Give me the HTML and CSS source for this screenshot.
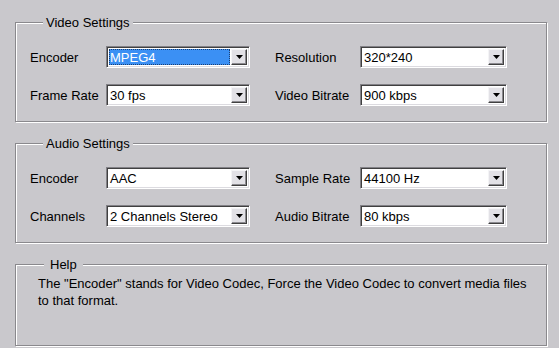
FILE: index.html
```html
<!DOCTYPE html>
<html lang="en">
<head>
    <meta charset="UTF-8">
    <title>Settings</title>
    <link rel="stylesheet" href="styles.css">
</head>
<body>
    <div class="panel">
        <fieldset class="group">
            <legend>Video Settings</legend>
            <div class="grid">
                <span class="label">Encoder</span>
                <div class="combo"><span class="value selected">MPEG4</span><span class="btn"><svg width="7" height="4" viewBox="0 0 7 4"><path d="M0 0h7L3.5 4z"/></svg></span></div>
                <span class="label col2">Resolution</span>
                <div class="combo"><span class="value">320*240</span><span class="btn"><svg width="7" height="4" viewBox="0 0 7 4"><path d="M0 0h7L3.5 4z"/></svg></span></div>

                <span class="label">Frame Rate</span>
                <div class="combo"><span class="value">30 fps</span><span class="btn"><svg width="7" height="4" viewBox="0 0 7 4"><path d="M0 0h7L3.5 4z"/></svg></span></div>
                <span class="label col2">Video Bitrate</span>
                <div class="combo"><span class="value">900 kbps</span><span class="btn"><svg width="7" height="4" viewBox="0 0 7 4"><path d="M0 0h7L3.5 4z"/></svg></span></div>
            </div>
        </fieldset>

        <fieldset class="group">
            <legend>Audio Settings</legend>
            <div class="grid">
                <span class="label">Encoder</span>
                <div class="combo"><span class="value">AAC</span><span class="btn"><svg width="7" height="4" viewBox="0 0 7 4"><path d="M0 0h7L3.5 4z"/></svg></span></div>
                <span class="label col2">Sample Rate</span>
                <div class="combo"><span class="value">44100 Hz</span><span class="btn"><svg width="7" height="4" viewBox="0 0 7 4"><path d="M0 0h7L3.5 4z"/></svg></span></div>

                <span class="label">Channels</span>
                <div class="combo"><span class="value">2 Channels Stereo</span><span class="btn"><svg width="7" height="4" viewBox="0 0 7 4"><path d="M0 0h7L3.5 4z"/></svg></span></div>
                <span class="label col2">Audio Bitrate</span>
                <div class="combo"><span class="value">80 kbps</span><span class="btn"><svg width="7" height="4" viewBox="0 0 7 4"><path d="M0 0h7L3.5 4z"/></svg></span></div>
            </div>
        </fieldset>

        <fieldset class="group help">
            <legend>Help</legend>
            <p class="help-text">The "Encoder" stands for Video Codec, Force the Video Codec to convert media files to that format.</p>
        </fieldset>
    </div>
</body>
</html>
```

FILE: styles.css
```css
body {
    margin: 0;
    background: #c9c8cc;
    font-family: "Liberation Sans", Arial, sans-serif;
    font-size: 13px;
    color: #000;
}

.panel {
    padding: 15px 0 0 15px;
}

.group {
    width: 532px;
    box-sizing: border-box;
    margin: 0 0 14px 0;
    padding: 16px 0 15px 14px;
    border: 1px solid #8a898d;
    box-shadow: inset 1px 1px 0 #fff, 1px 1px 0 #fff;
    min-width: 0;
}

.group legend {
    margin-left: 13px;
    padding: 0 3px;
    line-height: 15px;
    background: #c9c8cc;
}

.grid {
    display: grid;
    grid-template-columns: 76px 144px 110px 147px;
    grid-auto-rows: 22px;
    row-gap: 16px;
    align-items: center;
}

.label {
    line-height: 15px;
}

.label.col2 {
    padding-left: 25px;
}

/* sunken combo box */
.combo {
    height: 22px;
    box-sizing: border-box;
    display: flex;
    align-items: stretch;
    background: #fff;
    border: 1px solid;
    border-color: #828186 #fff #fff #828186;
    box-shadow: inset 1px 1px 0 #404040, inset -1px -1px 0 #dcdbe0;
    padding: 2px;
}

.value {
    flex: 1;
    display: flex;
    align-items: center;
    padding-left: 1px;
    line-height: 15px;
    white-space: nowrap;
    overflow: hidden;
}

.value.selected {
    background: #3b90f4;
    color: #fff;
    outline: 1px dotted #1c3f70;
    outline-offset: -1px;
    margin-right: 1px;
}

.btn {
    width: 16px;
    box-sizing: border-box;
    display: flex;
    align-items: center;
    justify-content: center;
    background: #e2e1e6;
    border: 1px solid;
    border-color: #f4f4f6 #404040 #404040 #f4f4f6;
    box-shadow: inset -1px -1px 0 #8c8b90;
}

.btn svg {
    display: block;
    fill: #000;
}

.help {
    height: 89px;
    padding: 3px 8px 0 22px;
}

.help legend {
    margin-left: 6px;
    padding: 0 6px;
}

.help-text {
    margin: 0;
    line-height: 17px;
}
```
